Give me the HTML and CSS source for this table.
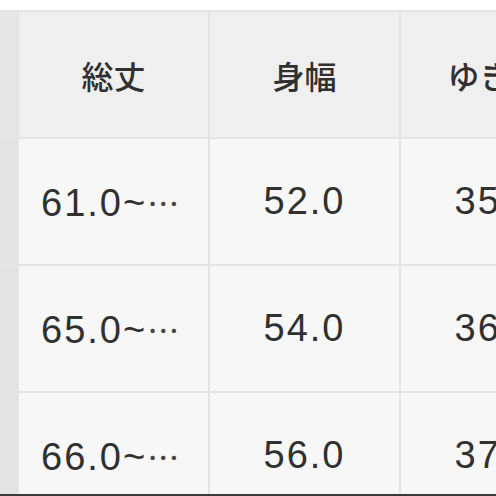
FILE: index.html
```html
<!DOCTYPE html>
<html lang="ja">
<head>
<meta charset="utf-8">
<link rel="stylesheet" href="styles.css">
</head>
<body>
<div class="page">
  <table class="size-table">
    <tr class="head">
      <td class="side"></td>
      <th>総丈</th>
      <th>身幅</th>
      <th>ゆき丈</th>
    </tr>
    <tr>
      <td class="side"></td>
      <td class="trunc">61.0~<span class="dots">…</span></td>
      <td>52.0</td>
      <td>35.0</td>
    </tr>
    <tr>
      <td class="side"></td>
      <td class="trunc">65.0~<span class="dots">…</span></td>
      <td>54.0</td>
      <td>36.0</td>
    </tr>
    <tr>
      <td class="side"></td>
      <td class="trunc">66.0~<span class="dots">…</span></td>
      <td>56.0</td>
      <td>37.0</td>
    </tr>
  </table>
</div>
</body>
</html>
```
FILE: styles.css
```css
html, body {
  margin: 0;
  padding: 0;
  background: #ffffff;
  overflow: hidden;
}
.page {
  width: 496px;
  height: 496px;
  overflow: hidden;
  padding-top: 10px;
  box-sizing: border-box;
  border-bottom: 2px solid #3a3a3a;
}
.size-table {
  border-collapse: collapse;
  table-layout: fixed;
  width: 591px;
  font-family: "Liberation Sans", "Noto Sans CJK JP", sans-serif;
  color: #303030;
}
.size-table td, .size-table th {
  border: 2px solid #e4e4e4;
  width: 191px;
  height: 127px;
  padding: 0 22px;
  text-align: center;
  vertical-align: middle;
  background: #f7f7f7;
  font-size: 38px;
  letter-spacing: 2px;
  font-weight: 400;
  white-space: nowrap;
  overflow: hidden;
  box-sizing: border-box;
}
.size-table th {
  background: #efefef;
  font-family: "Noto Sans CJK JP", sans-serif;
  font-size: 32px;
  letter-spacing: 0;
  font-weight: 500;
}
.size-table td.side {
  width: 18px;
  padding: 0;
  background: #e3e3e3;
  border-left: none;
}
.size-table tr.head td.side {
  background: #e6e6e6;
}
.size-table td.trunc {
  text-align: left;
  padding-left: 22px;
}
.dots {
  font-family: "Noto Sans CJK JP", sans-serif;
  font-size: 32px;
  letter-spacing: 0;
  color: #444444;
}
```
